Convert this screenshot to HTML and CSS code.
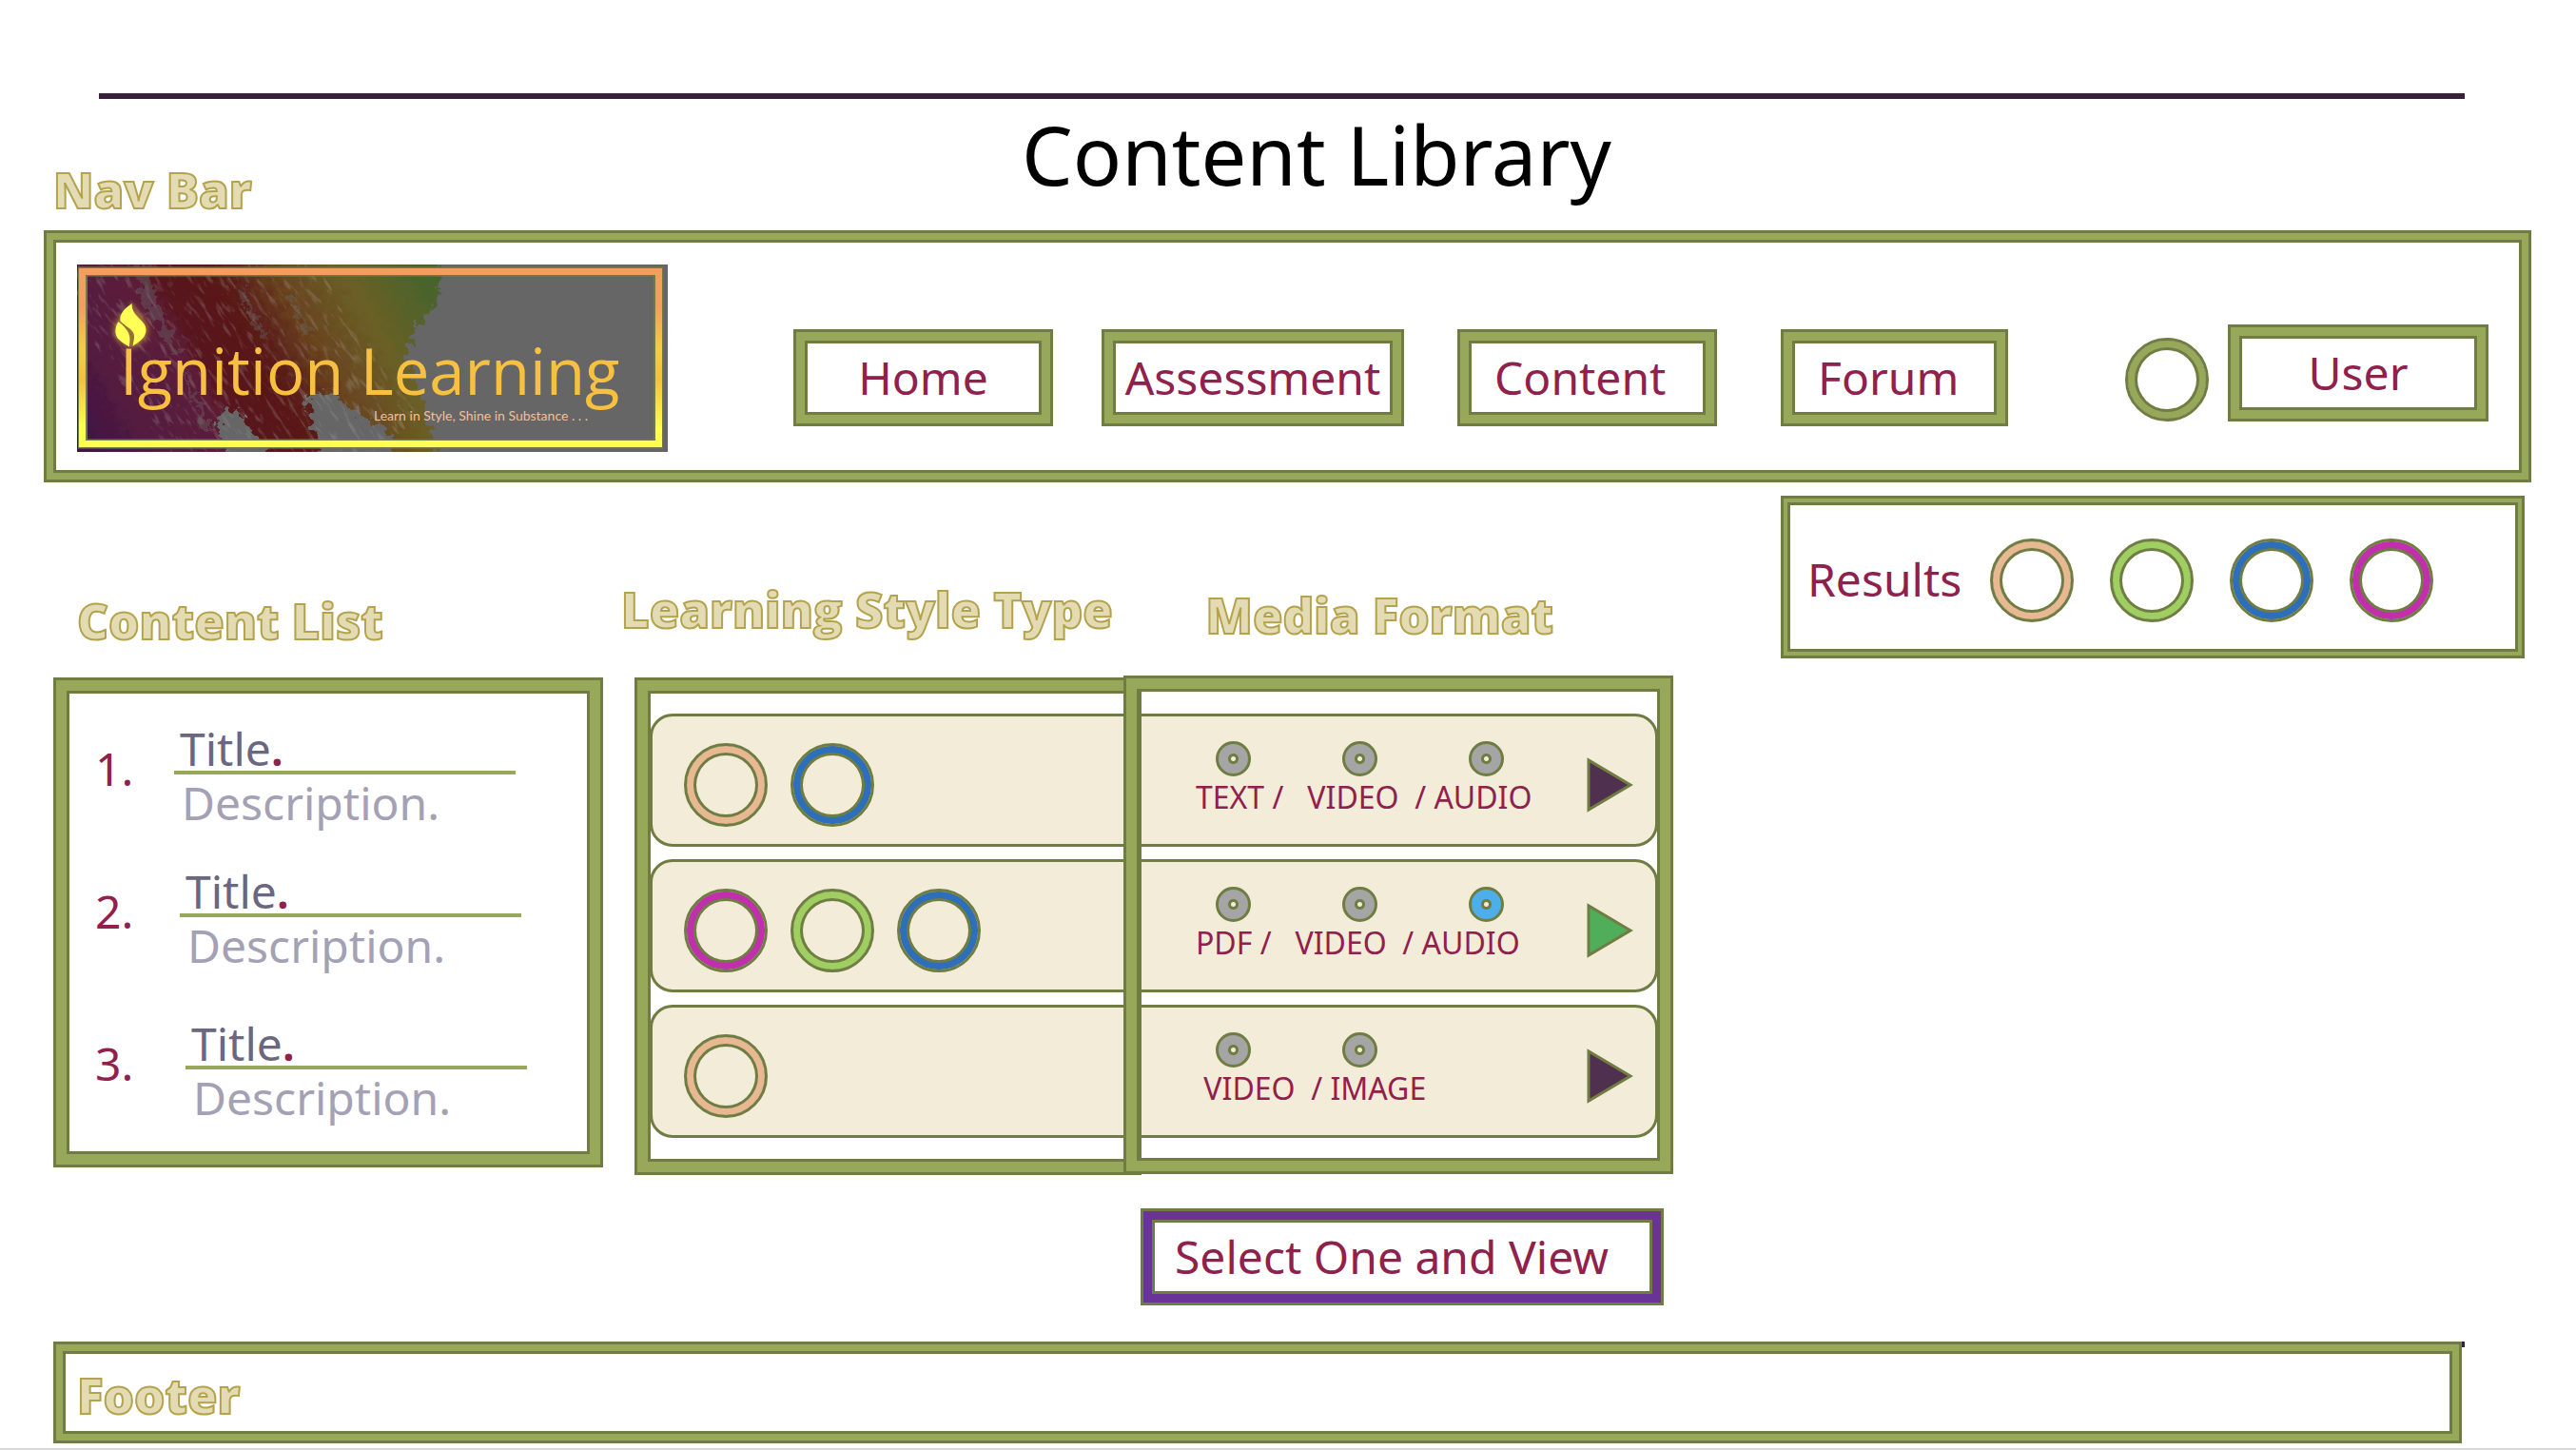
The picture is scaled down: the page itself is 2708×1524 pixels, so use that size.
FILE: index.html
```
<!DOCTYPE html>
<html lang="en">
<head>
<meta charset="utf-8">
<meta name="viewport" content="width=device-width, initial-scale=1">
<title>Content Library</title>
<link rel="stylesheet" href="styles.css">
</head>
<body>
<header class="page-header">
  <h2 class="section-title">Nav Bar</h2>
  <h1 class="page-title">Content Library</h1>
</header>

<nav class="navbar frame" aria-label="Main">
  <a class="logo" href="#home" aria-label="Ignition Learning">
    <svg viewBox="0 0 621 197" width="621" height="197">
      <defs>
        <linearGradient id="frame-fill" x1="0" y1="0" x2="0" y2="1">
          <stop offset="0.22" stop-color="#f29f5e"/>
          <stop offset="0.45" stop-color="#f6cb45"/>
          <stop offset="0.62" stop-color="#f6bf3e"/>
          <stop offset="0.9" stop-color="#ffff50"/>
        </linearGradient>
        <linearGradient id="paint" gradientUnits="userSpaceOnUse" x1="-20" y1="170" x2="340" y2="-30">
          <stop offset="0" stop-color="#3a1344"/>
          <stop offset="0.2" stop-color="#561c40"/>
          <stop offset="0.36" stop-color="#5c1c38"/>
          <stop offset="0.42" stop-color="#58161a"/>
          <stop offset="0.56" stop-color="#5a1a19"/>
          <stop offset="0.68" stop-color="#69441f"/>
          <stop offset="0.83" stop-color="#6b6026"/>
          <stop offset="1" stop-color="#48642b"/>
        </linearGradient>
        <filter id="ragged" x="-5%" y="-5%" width="110%" height="110%">
          <feTurbulence type="fractalNoise" baseFrequency="0.12" numOctaves="4" seed="4"/>
          <feDisplacementMap in="SourceGraphic" scale="24" xChannelSelector="R" yChannelSelector="G"/>
        </filter>
        <filter id="speckle" x="0" y="0" width="100%" height="100%">
          <feTurbulence type="fractalNoise" baseFrequency="0.05 0.22" numOctaves="4" seed="8"/>
          <feColorMatrix values="0 0 0 0 0.42  0 0 0 0 0.4  0 0 0 0 0.4  0 0 0 5 -2.8"/>
        </filter>
        <filter id="glow" x="-60%" y="-40%" width="220%" height="180%">
          <feGaussianBlur stdDeviation="4"/>
        </filter>
        <clipPath id="card"><path d="M0 0h621v197H0z"/></clipPath>
      </defs>
      <g clip-path="url(#card)">
        <path fill="#666" d="M0 0h621v197H0z"/>
        <path fill="url(#paint)" filter="url(#ragged)" d="M-20 -20H385L378 40L352 72L346 100L358 130L384 220H345L330 178L300 160L262 132L240 140L262 220L218 220L190 180L160 146L148 165L160 220H-20z"/>
        <g transform="rotate(56 150 100)" opacity=".25">
          <path filter="url(#speckle)" d="M-60 130h380v70h-380zM-60 -40h380v60h-380z"/>
        </g>
        <path fill="#666" opacity=".4" filter="url(#ragged)" d="M58 0h16l12 45l24 50h-8l-30 -50zM165 25l8 0l26 50h-5zM222 30l5 0l20 45l-6 0zM104 95l10 20l30 60h-10z"/>
      </g>
      <path fill="none" stroke="#6f7d42" stroke-width="10" d="M6 7.500h605v181H6z"/>
      <path fill="url(#frame-fill)" fill-rule="evenodd" d="M2 4h613v188H2zM9 11v174h599V11z"/>
      <path fill="#ffe23c" filter="url(#glow)" opacity=".8" d="M57.600 41C58 54 72.700 57 72.700 69C72.700 77 64 82 57 87C50 82 40.500 78 40.500 69C40.500 56 57 54 57.600 41z"/>
      <path fill="#ff5" d="M57.700 41C50 46 44 52 45.500 60C51 66 61 68 60 77L58.300 86C66 81 73 76 72.500 68C72 58 57 55 57.700 41zM43.500 60C39.500 66 39 74 44 79C47 82 51 84 55 86.500C56 76 56 70 43.500 60z"/>
      <path fill="#94713a" d="M44 58C51 66 61 68 60 77L58.300 86L55.500 86C56.500 76 56.500 70 43.500 60z"/>
      <text class="logo-name" x="45" y="137">Ignition Learning</text>
      <text class="logo-tagline" x="312" y="164">Learn in Style, Shine in Substance . . .</text>
    </svg>
  </a>
  <ul class="menu">
    <li class="menu-item"><a class="nav-link frame" href="#home">Home</a></li>
    <li class="menu-item menu-item-wide"><a class="nav-link frame" href="#assessment">Assessment</a></li>
    <li class="menu-item"><a class="nav-link nav-link-start frame" href="#content">Content</a></li>
    <li class="menu-item menu-item-narrow"><a class="nav-link nav-link-start frame" href="#forum">Forum</a></li>
  </ul>
  <div class="account">
    <span class="ring"></span>
    <a class="nav-link frame" href="#user">User</a>
  </div>
</nav>

<main class="workspace">
  <section class="content-list">
    <h2 class="section-title">Content List</h2>
    <ol class="entries frame">
      <li class="entry"><span class="entry-number">1.</span><div class="entry-text"><h3 class="entry-title">Title<b>.</b></h3><p class="entry-description">Description.</p></div></li>
      <li class="entry"><span class="entry-number">2.</span><div class="entry-text"><h3 class="entry-title">Title<b>.</b></h3><p class="entry-description">Description.</p></div></li>
      <li class="entry"><span class="entry-number">3.</span><div class="entry-text"><h3 class="entry-title">Title<b>.</b></h3><p class="entry-description">Description.</p></div></li>
    </ol>
  </section>

  <section class="picker">
    <div class="picker-titles">
      <h2 class="section-title">Learning Style Type</h2>
      <h2 class="section-title">Media Format</h2>
    </div>
    <div class="board">
      <div class="lesson">
        <div class="styles"><span class="ring ring-peach"></span><span class="ring ring-blue"></span></div>
        <div class="media">
          <div class="discs"><input class="disc" type="radio" name="m1" id="m1-text"><input class="disc" type="radio" name="m1" id="m1-video"><input class="disc" type="radio" name="m1" id="m1-audio"></div>
          <div class="formats"><label for="m1-text">TEXT</label> /   <label for="m1-video">VIDEO</label>  / <label for="m1-audio">AUDIO</label></div>
        </div>
        <button class="play" type="button" aria-label="Play"><svg viewBox="0 0 50 58" width="50" height="58"><path d="M2 3v52L46 29z"/></svg></button>
      </div>
      <div class="lesson">
        <div class="styles"><span class="ring ring-magenta"></span><span class="ring ring-green"></span><span class="ring ring-blue"></span></div>
        <div class="media">
          <div class="discs"><input class="disc" type="radio" name="m2" id="m2-pdf"><input class="disc" type="radio" name="m2" id="m2-video"><input class="disc" type="radio" name="m2" id="m2-audio" checked></div>
          <div class="formats"><label for="m2-pdf">PDF</label> /   <label for="m2-video">VIDEO</label>  / <label for="m2-audio">AUDIO</label></div>
        </div>
        <button class="play play-ready" type="button" aria-label="Play"><svg viewBox="0 0 50 58" width="50" height="58"><path d="M2 3v52L46 29z"/></svg></button>
      </div>
      <div class="lesson">
        <div class="styles"><span class="ring ring-peach"></span></div>
        <div class="media">
          <div class="discs"><input class="disc" type="radio" name="m3" id="m3-video"><input class="disc" type="radio" name="m3" id="m3-image"></div>
          <div class="formats"> <label for="m3-video">VIDEO</label>  / <label for="m3-image">IMAGE</label></div>
        </div>
        <button class="play" type="button" aria-label="Play"><svg viewBox="0 0 50 58" width="50" height="58"><path d="M2 3v52L46 29z"/></svg></button>
      </div>
      <div class="board-frame board-frame-styles frame"></div>
      <div class="board-frame board-frame-media frame"></div>
    </div>
    <button class="view-button frame" type="button">Select One and View</button>
  </section>

  <aside class="results frame">
    <span class="results-label">Results</span>
    <div class="results-rings"><span class="ring ring-peach"></span><span class="ring ring-green"></span><span class="ring ring-blue"></span><span class="ring ring-magenta"></span></div>
  </aside>
</main>

<footer class="footer frame">
  <h2 class="section-title">Footer</h2>
</footer>
</body>
</html>
```
FILE: styles.css
```
:root {
  --olive: #6f7d42;
  --moss: #98a85b;
  --crimson: #8f214c;
  --plum: #38213a;
  --cream: #f2ecd9;
}

*, *::before, *::after { box-sizing: border-box; }

body {
  margin: 0;
  padding-top: 98px;
  border-bottom: 2px solid #d9d9d9;
  background: #fff;
  color: var(--crimson);
  font: 450 48px/60px "Noto Sans", sans-serif;
}

h1, h2, h3, p, ul, ol { margin: 0; padding: 0; font-weight: 450; list-style: none; }
a { color: inherit; text-decoration: none; }
button { font: inherit; color: inherit; }

/* Double outlined border: dark edge, coloured band, dark edge */
.frame, .ring {
  --band: 7px;
  --fill: var(--moss);
  border: 3px solid var(--olive);
  box-shadow: inset 0 0 0 var(--band) var(--fill), inset 0 0 0 calc(var(--band) + 3px) var(--olive);
}

.ring {
  display: block;
  flex: none;
  width: 88px;
  height: 88px;
  border-radius: 50%;
}
.ring-peach { --fill: #e8b893; }
.ring-green { --fill: #9ecf60; }
.ring-blue { --fill: #2d6fbb; }
.ring-magenta { --fill: #c22fae; }

.section-title {
  color: #e3dbb3;
  font: 800 51px/60px "Open Sans", sans-serif;
  white-space: nowrap;
  -webkit-text-stroke: 2px #b5a34c;
}

.page-header {
  display: grid;
  grid-template-columns: 1fr auto 1fr;
  min-height: 144px;
  margin: 0 117px 0 104px;
  border-top: 6px solid var(--plum);
}
.page-header .section-title { align-self: end; margin: 0 0 13px -48px; }
.page-title {
  padding-left: 73px;
  color: #000;
  font-size: 85px;
  line-height: 116px;
}

.navbar {
  display: flex;
  margin: 0 47px 0 46px;
  padding: 33px 42px 29px 32px;
}
.logo { flex: none; height: 197px; }
.logo svg { display: block; }
.logo-name { fill: #f7c040; font: 500 67px "Open Sans", sans-serif; }
.logo-tagline { fill: #f0bf9a; font: 14px "Lato", sans-serif; }

.menu { display: flex; flex: 1277; margin: 68px 0 0 132px; }
.menu-item { flex: 273 1 0; }
.menu-item-wide { flex-grow: 318; margin: 0 56px 0 51px; }
.menu-item-narrow { flex-grow: 239; margin-left: 67px; }
.nav-link {
  --band: 9px;
  display: block;
  height: 102px;
  padding-top: 18px;
  text-align: center;
}
.nav-link-start { padding-left: 36px; text-align: left; }
.account {
  display: flex;
  flex: 382;
  gap: 20px;
  align-items: flex-end;
  align-self: flex-start;
  margin: 63px 0 0 123px;
}
.account .nav-link { flex: 1; }

.workspace {
  display: grid;
  grid-template-columns: minmax(0, 611fr) minmax(0, 1205fr) minmax(0, 782fr);
  align-items: start;
  margin: 14px 54px 0 56px;
}

.content-list { margin-right: 33px; padding-top: 101px; }
.content-list .section-title { margin: 0 0 30px 25px; }
.entries { --band: 11px; padding: 49px 70px 40px 41px; }
.entry { display: grid; grid-template-columns: 83px 1fr; }
.entry + .entry { margin-top: 40px; }
.entry:last-child { margin-top: 50px; }
.entry-number { padding-top: 14px; }
.entry-text { width: 359px; }
.entry:nth-child(2) .entry-text { margin-left: 6px; }
.entry:nth-child(3) .entry-text { margin-left: 12px; }
.entry-title {
  padding-left: 6px;
  border-bottom: 4px solid var(--moss);
  color: #6b6780;
  font-size: 48px;
  line-height: 46px;
}
.entry-title b { color: var(--crimson); font-weight: 600; }
.entry-description { padding-left: 8px; color: #a5a1b5; }

.picker { margin-right: 113px; padding-top: 89px; }
.picker-titles { display: grid; grid-template-columns: 55% 1fr; margin-bottom: 34px; }
.picker-titles :first-child { margin-left: -14px; }
.picker-titles :last-child { margin-top: 6px; }

.board {
  position: relative;
  display: flex;
  flex-direction: column;
  gap: 13px;
  padding: 40px 16px 39px;
}
.lesson {
  display: grid;
  grid-template-columns: 571fr 411fr 72fr;
  height: 140px;
  border: 3px solid var(--olive);
  border-radius: 24px;
  background: var(--cream);
}
.styles { display: flex; gap: 24px; padding: 28px 0 0 33px; }
.media { padding-top: 26px; }
.discs { display: flex; gap: 96px; height: 37px; padding-left: 21px; }
.disc {
  --tone: #a5a5a5;
  appearance: none;
  flex: none;
  width: 37px;
  height: 37px;
  margin: 0;
  border: 3px solid var(--olive);
  border-radius: 50%;
  background: radial-gradient(circle, var(--cream) 2px, var(--olive) 3px, var(--olive) 5px, var(--tone) 6px);
}
.disc:checked { --tone: #4eaeea; }
.formats { margin-top: 2px; font-size: 32px; font-weight: 400; line-height: 40px; white-space: pre; }
.play {
  align-self: center;
  width: 50px;
  height: 58px;
  margin-top: 10px;
  padding: 0;
  border: 0;
  background: none;
}
.play svg { display: block; fill: #50304f; stroke: var(--olive); stroke-width: 3px; }
.play-ready svg { fill: #50ae5b; }

.board-frame { --band: 11px; position: absolute; pointer-events: none; }
.board-frame-styles { top: 2px; bottom: 0; left: 0; right: 51.2%; }
.board-frame-media { top: 0; bottom: 1px; right: 0; left: 47.1%; }

.view-button {
  --band: 9px;
  --fill: #6a3398;
  display: block;
  width: 550px;
  height: 102px;
  margin: 35px 10px 0 auto;
  padding: 0 0 0 33px;
  background: none;
  text-align: left;
}

.results {
  --band: 4px;
  display: flex;
  gap: 30px;
  align-items: center;
  height: 171px;
  padding: 4px 0 0 25px;
}
.results-rings { display: flex; gap: 38px; padding-top: 2px; }

.footer {
  position: relative;
  margin: 38px 120px 5px 56px;
  padding: 23px 22px 18px;
}
.footer::after {
  content: "";
  position: absolute;
  top: -3px;
  right: -6px;
  width: 3px;
  height: 6px;
  background: var(--plum);
}
```
